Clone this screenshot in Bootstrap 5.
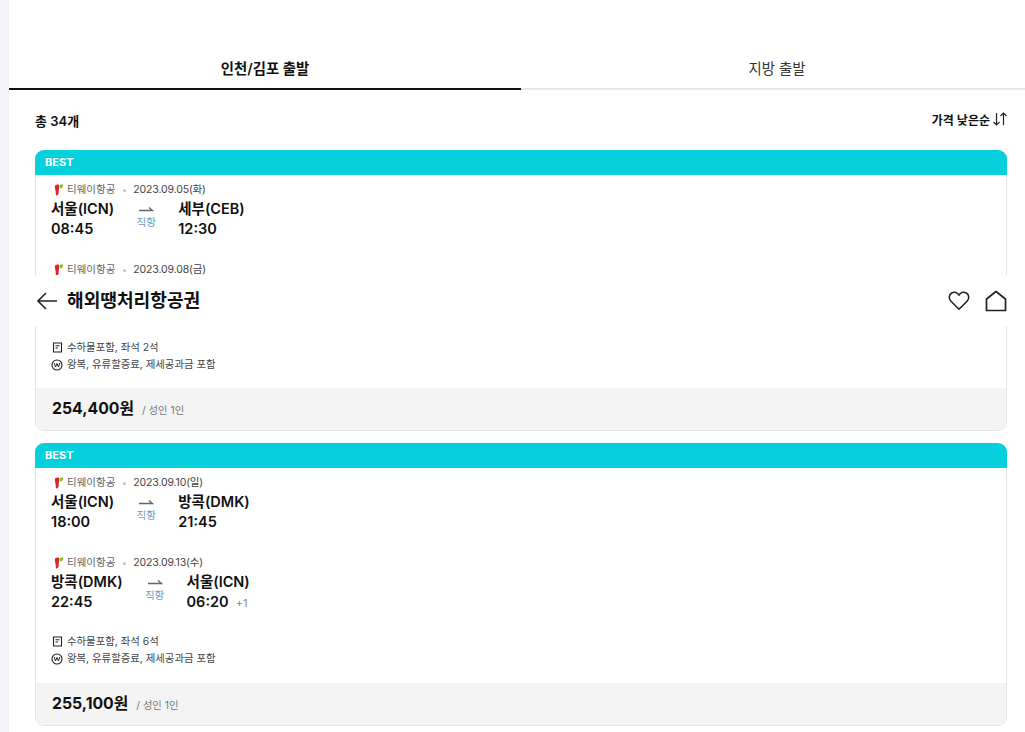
<!DOCTYPE html>
<html lang="ko">
<head>
    <meta charset="UTF-8">
    <meta name="viewport" content="width=device-width, initial-scale=1.0">
    <title>해외땡처리항공권</title>
    <link href="https://cdn.jsdelivr.net/npm/bootstrap@5.3.0/dist/css/bootstrap.min.css" rel="stylesheet">
    <style>
        html, body { height: 100%; overflow: hidden; }
        body { font-family: Inter, "Noto Sans CJK KR", sans-serif; color: #111; background: #f3f5fa; }
        .page-main { margin-left: 9px; background: #fff; height: 732px; padding-top: 47px; position: relative; overflow: hidden; }
        .tab-item { flex: 0 0 512px; height: 43px; line-height: 44px; text-align: center; font-size: 14.4px; color: #333; border-bottom: 2px solid #e8e8e8; }
        .tab-item.on { color: #111; font-weight: 600; border-bottom-color: #111; }
        .list-top { padding: 22px 18px 0 26px; height: 60px; font-size: 12px; font-weight: 600; }
        .list-count { font-size: 13px; }
        .sort-mark { margin-left: 3px; }
        .flight-list { padding: 0 18px 0 26px; }
        .deal-card { border: 1px solid #e4e4e4; border-radius: 9px; margin-bottom: 12px; }
        .deal-card .card-header { background: #06d0dc; color: #fff; border: 0; border-radius: 9px 9px 0 0; height: 25px; padding: 0 10px; margin: -1px -1px 0; font-size: 11px; font-weight: 700; line-height: 25px; }
        .deal-card .card-body { padding: 7px 15px 0; height: 213px; flex: none; }
        .deal-card + .deal-card .card-body { height: 215px; }
        .deal-card .card-footer { background: #f4f4f4; border: 0; border-radius: 0 0 8px 8px; height: 42px; padding: 0 16px; }
        .seg-box { height: 80px; }
        .seg-meta { font-size: 10.5px; color: #444; height: 16px; line-height: 16px; padding-left: 3px; }
        .seg-logo { margin-right: 3px; }
        .seg-air { color: #666; }
        .seg-date { letter-spacing: -0.15px; }
        .seg-dot { width: 3px; height: 3px; border-radius: 50%; background: #c4c4c4; margin: 0 7px 0 8px; }
        .seg-col { font-size: 14.5px; font-weight: 600; line-height: 20px; margin-top: 1px; white-space: nowrap; }
        .seg-dir { width: 64px; text-align: center; font-size: 10.5px; line-height: 12px; color: #6d9dc5; font-weight: 400; padding-top: 7px; }
        .seg-dir svg { display: block; margin: 0 auto 5px; }
        .seg-plus { font-size: 11px; color: #888; font-weight: 400; margin-left: 7px; }
        .info-box { margin-top: -2px; padding-left: 1px; font-size: 10.4px; color: #444; line-height: 17px; }
        .deal-card:first-child .info-box { margin-top: -3px; }
        .info-box svg { margin-right: 4px; }
        .won-mark { margin-left: -1px; }
        .price-num { font-size: 15.8px; font-weight: 700; }
        .price-sub { font-size: 10.3px; color: #777; margin-left: 8px; padding-top: 3px; }
        .top-head { position: absolute; left: 0; right: 0; top: 275px; height: 51px; background: #fff; padding: 0 18px 0 27px; z-index: 5; }
        .top-head h1 { font-size: 18.1px; font-weight: 700; margin: 0 0 0 9px; }
        .home-mark { margin-left: 15px; }
    </style>
</head>
<body>
<svg width="0" height="0" class="position-absolute">
    <symbol id="logo-air" viewBox="0 0 10 12">
        <path d="M1.500 1C3 .2 5.200 .3 5.400 2 5.500 3.500 4.700 5 4.800 7 4.900 9 4.300 11.500 2.800 11.500 1.300 11.500 2 8.500 1.500 6.500 1.100 5 .4 2 1.500 1Z" fill="#d8262c"/>
        <path d="M6.500 .7C7.800 .2 9.300 .5 9 2 8.700 3.200 7.600 4.300 6.500 4.800 6 4 6 1.800 6.500 .7Z" fill="#7ab800"/>
    </symbol>
    <symbol id="ico-arrow" viewBox="0 0 16 7">
        <path d="M1 5.500H14.500L11 2.500" fill="none" stroke="#666" stroke-width="1.300"/>
    </symbol>
    <symbol id="ico-doc" viewBox="0 0 11 11">
        <path d="M1.500 1H9.500V10H1.500ZM3.500 3.700H7.500M3.500 6H6" fill="none" stroke="#222" stroke-width="1.100"/>
    </symbol>
    <symbol id="ico-won" viewBox="0 0 12 12">
        <circle cx="6" cy="6" r="5" fill="none" stroke="#222" stroke-width="1.100"/>
        <path d="M3.200 4L4.500 8 6 4.500 7.500 8 8.800 4" fill="none" stroke="#222" stroke-width="1"/>
    </symbol>
</svg>

<div class="page-main">
    <div class="d-flex">
        <div class="tab-item on">인천/김포 출발</div>
        <div class="tab-item">지방 출발</div>
    </div>

    <div class="list-top d-flex justify-content-between">
        <span class="list-count">총 34개</span>
        <span class="d-flex align-items-start">가격 낮은순
            <svg class="sort-mark" width="14" height="14" viewBox="0 0 14 14"><path d="M3.500 1V13M.5 10L3.500 13 6.500 10M10.500 13V1M7.500 4L10.500 1 13.500 4" fill="none" stroke="#222" stroke-width="1.200"/></svg>
        </span>
    </div>

    <div class="flight-list" id="flightList"></div>

    <div class="top-head d-flex align-items-center">
        <svg width="22" height="18" viewBox="0 0 22 18"><path d="M21 9H2M10 1L2 9 10 17" fill="none" stroke="#222" stroke-width="1.600"/></svg>
        <h1>해외땡처리항공권</h1>
        <svg class="ms-auto" width="22" height="21" viewBox="0 0 24 22"><path d="M12 20.500L3 11.500C.5 9 1 4.500 4 2.800 7 1 10.500 2.300 12 5.200 13.500 2.300 17 1 20 2.800 23 4.500 23.500 9 21 11.500Z" fill="none" stroke="#222" stroke-width="1.700" stroke-linejoin="round"/></svg>
        <svg class="home-mark" width="22" height="22" viewBox="0 0 22 22"><path d="M1.500 20.500V9L11 1.500 20.500 9V20.500Z" fill="none" stroke="#222" stroke-width="1.700" stroke-linejoin="round"/></svg>
    </div>
</div>

<script>
    // the second leg of the first deal sits under the fixed header, only its date line shows
    const deals = [
        { price: '254,400원', seats: '좌석 2석', segs: [
            { date: '2023.09.05(화)', from: '서울(ICN)', dep: '08:45', to: '세부(CEB)', arr: '12:30' },
            { date: '2023.09.08(금)' }
        ]},
        { price: '255,100원', seats: '좌석 6석', segs: [
            { date: '2023.09.10(일)', from: '서울(ICN)', dep: '18:00', to: '방콕(DMK)', arr: '21:45' },
            { date: '2023.09.13(수)', from: '방콕(DMK)', dep: '22:45', to: '서울(ICN)', arr: '06:20', plus: '+1' }
        ]}
    ];

    function segHtml(s) {
        const route = !s.from ? '' : `
                <div class="d-flex">
                    <div class="seg-col"><div>${s.from}</div><div>${s.dep}</div></div>
                    <div class="seg-dir"><svg width="16" height="7"><use href="#ico-arrow"/></svg>직항</div>
                    <div class="seg-col"><div>${s.to}</div><div>${s.arr}${s.plus ? `<span class="seg-plus">${s.plus}</span>` : ''}</div></div>
                </div>`;
        return `
            <div class="seg-box">
                <div class="seg-meta d-flex align-items-center">
                    <svg width="10" height="12" class="seg-logo"><use href="#logo-air"/></svg>
                    <span class="seg-air">티웨이항공</span><span class="seg-dot"></span><span class="seg-date">${s.date}</span>
                </div>${route}
            </div>`;
    }

    document.getElementById('flightList').innerHTML = deals.map(d => `
        <div class="card deal-card">
            <div class="card-header">BEST</div>
            <div class="card-body">
                ${d.segs.map(segHtml).join('')}
                <div class="info-box">
                    <div class="d-flex align-items-center"><svg width="11" height="11"><use href="#ico-doc"/></svg>수하물포함, ${d.seats}</div>
                    <div class="d-flex align-items-center"><svg class="won-mark" width="12" height="12"><use href="#ico-won"/></svg>왕복, 유류할증료, 제세공과금 포함</div>
                </div>
            </div>
            <div class="card-footer d-flex align-items-center">
                <span class="price-num">${d.price}</span><span class="price-sub">/ 성인 1인</span>
            </div>
        </div>`).join('');
</script>
<script src="https://cdn.jsdelivr.net/npm/bootstrap@5.3.0/dist/js/bootstrap.bundle.min.js"></script>
</body>
</html>
